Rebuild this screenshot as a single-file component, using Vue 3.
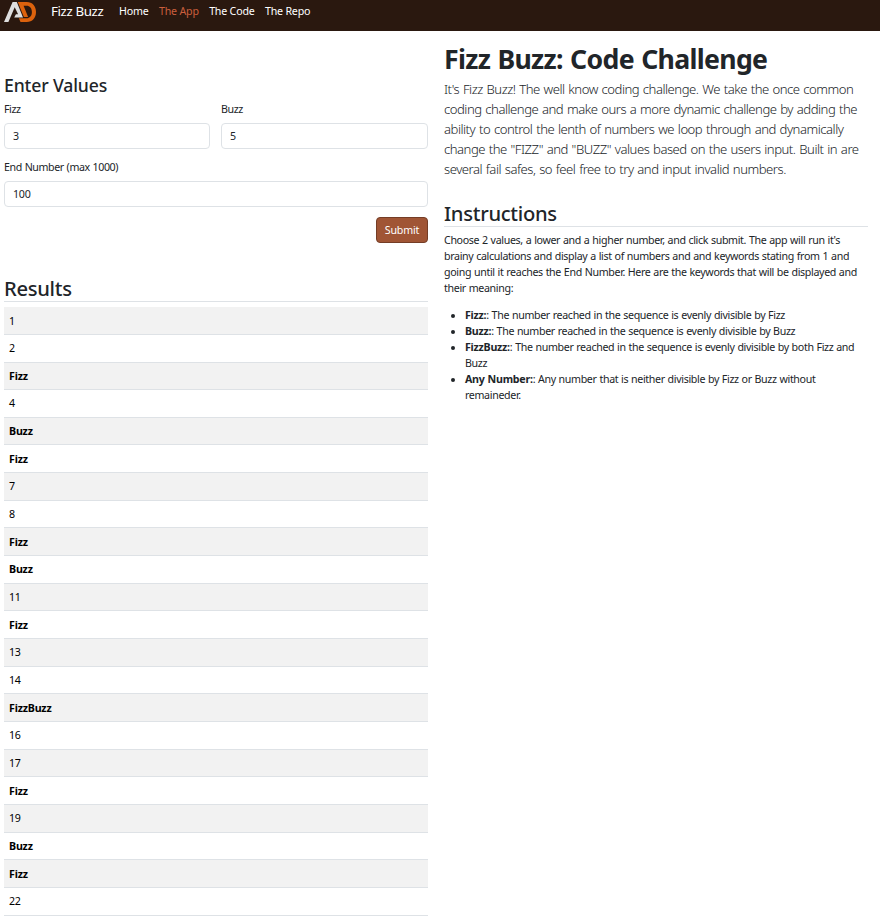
<script setup>
import { ref, computed } from 'vue'

const fizz = ref(3)
const buzz = ref(5)
const end = ref(100)
const rows = computed(() =>
  Array.from({ length: Math.min(22, end.value) }, (_, i) => {
    const n = i + 1
    return (n % fizz.value ? '' : 'Fizz') + (n % buzz.value ? '' : 'Buzz') || String(n)
  })
)
const links = ['Home', 'The App', 'The Code', 'The Repo']
</script>

<template>
  <div class="page">
    <nav class="nav">
      <svg class="logo" width="32" height="21" viewBox="0 0 32 21">
        <path d="M0 20L8.600 0h4.200l6.200 15.500h-8.800l1.700-3.300h2.200L10.700 5.200 4.400 20z" fill="#dedede" />
        <path d="M13.800 0h9c5.500 0 9.200 4 9.200 10s-3.700 10-9.200 10h-6.300l-1.600-3.700h7.600c3.300 0 5.400-2.400 5.400-6.300s-2.100-6.300-5.400-6.300h-2.900l4.500 11.300h-4.200z" fill="#dc620d" />
      </svg>
      <span class="brand">Fizz Buzz</span>
      <a v-for="l in links" :key="l" class="link" :class="{ active: l === 'The App' }">{{ l }}</a>
    </nav>
    <main class="cols">
      <section class="left">
        <h4>Enter Values</h4>
        <form @submit.prevent>
          <div class="pair">
            <label><span>Fizz</span><input v-model.number="fizz" /></label>
            <label><span>Buzz</span><input v-model.number="buzz" /></label>
          </div>
          <label class="end"><span>End Number (max 1000)</span><input v-model.number="end" /></label>
          <div class="actions"><button>Submit</button></div>
        </form>
        <h3 class="results">Results</h3>
        <div class="table">
          <div v-for="(r, i) in rows" :key="i" class="row" :class="{ bold: isNaN(r) }">{{ r }}</div>
        </div>
      </section>
      <section class="right">
        <h1>Fizz Buzz: Code Challenge</h1>
        <p class="lead">
          It's Fizz Buzz! The well know coding challenge. We take the once common<br />
          coding challenge and make ours a more dynamic challenge by adding the<br />
          ability to control the lenth of numbers we loop through and dynamically<br />
          change the "FIZZ" and "BUZZ" values based on the users input. Built in are<br />
          several fail safes, so feel free to try and input invalid numbers.
        </p>
        <h3>Instructions</h3>
        <p class="text">
          Choose 2 values, a lower and a higher number, and click submit. The app will run it's<br />
          brainy calculations and display a list of numbers and and keywords stating from 1 and<br />
          going until it reaches the End Number. Here are the keywords that will be displayed and<br />
          their meaning:
        </p>
        <ul>
          <li><b>Fizz:</b>: The number reached in the sequence is evenly divisible by Fizz</li>
          <li><b>Buzz:</b>: The number reached in the sequence is evenly divisible by Buzz</li>
          <li><b>FizzBuzz:</b>: The number reached in the sequence is evenly divisible by both Fizz and<br />Buzz</li>
          <li><b>Any Number:</b>: Any number that is neither divisible by Fizz or Buzz without<br />remaineder.</li>
        </ul>
      </section>
    </main>
  </div>
</template>

<style>
body { margin: 0; background: #fff; overflow: hidden; }
</style>

<style scoped>
* { box-sizing: border-box; }
.page { width: 880px; height: 916px; overflow: hidden; font: 10.667px/16px "Segoe UI", "Noto Sans", sans-serif; color: #212529; letter-spacing: -0.28px; }
.nav { height: 31px; background: #2a180f; display: flex; align-items: flex-start; padding: 2px 4px 0; color: #fff; letter-spacing: -0.2px; }
.logo { display: block; }
.brand { margin: -1px 16px 0 15px; font-size: 13.333px; line-height: 20px; letter-spacing: -0.38px; width: 52px; white-space: nowrap; }
.link { line-height: 19px; margin-right: 10.4px; white-space: nowrap; }
.active { color: #cb5f3d; }
.cols { display: grid; grid-template-columns: 424px 424px; column-gap: 16px; padding-left: 4px; }
h1, h3, h4, p, ul { margin: 0; }
h4 { margin-top: 44px; font-size: 17.6px; line-height: 21px; font-weight: 500; letter-spacing: -0.13px; }
form { margin-top: 5px; }
.pair { display: grid; grid-template-columns: 206px 207px; column-gap: 11px; }
label { display: block; }
label span { display: block; height: 22px; letter-spacing: -0.42px; word-spacing: 0.5px; }
input { display: block; width: 100%; height: 26px; border: 1px solid #dee2e6; border-radius: 4px; padding: 0 8px; font: inherit; letter-spacing: inherit; color: inherit; background: #fff; }
.end { margin-top: 10px; }
.actions { display: flex; justify-content: flex-end; margin-top: 10px; }
button { width: 52px; height: 26px; padding: 0; border: 1px solid #743d26; border-radius: 4px; background: #a05535; color: #fff; font: inherit; letter-spacing: -0.2px; }
h3 { font-size: 20.2px; line-height: 25px; font-weight: 500; letter-spacing: -0.3px; border-bottom: 1px solid #dee2e6; height: 26px; }
.results { margin-top: 33px; }
.table { margin-top: 5.2px; color: #000; }
.row { height: 27.667px; padding: 5.333px 5px; border-bottom: 1px solid #dee2e6; }
.row:nth-child(odd) { background: #f2f2f2; }
.bold, b { font-weight: 700; }
.bold { letter-spacing: -0.2px; }
h1 { margin-top: 12px; font-size: 26.667px; line-height: 32px; font-weight: 700; letter-spacing: -0.68px; word-spacing: 1px; white-space: nowrap; }
.lead { margin-top: 4px; font-size: 13.1px; line-height: 20px; font-weight: 300; letter-spacing: -0.48px; word-spacing: 0.8px; white-space: nowrap; }
.right h3 { margin-top: 22px; }
.text { margin-top: 5px; white-space: nowrap; letter-spacing: -0.35px; word-spacing: 0.4px; }
ul { margin-top: 11px; padding-left: 21px; white-space: nowrap; letter-spacing: -0.35px; word-spacing: 0.4px; }
b { letter-spacing: -0.25px; }
</style>
